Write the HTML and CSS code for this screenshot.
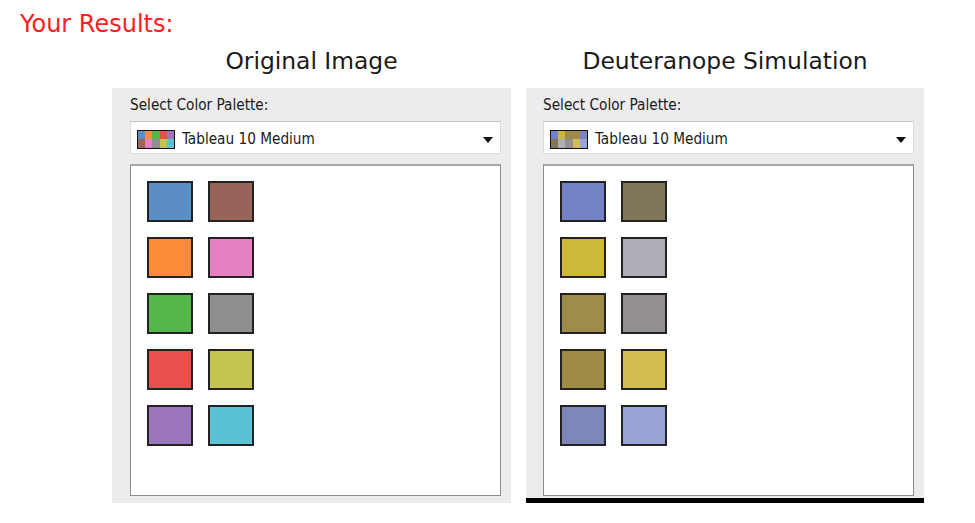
FILE: index.html
```html
<!DOCTYPE html>
<html>
<head>
<meta charset="utf-8">
<link rel="stylesheet" href="styles.css">
</head>
<body>
<div class="results">Your Results:</div>
<div class="row titles">
  <div class="title">Original Image</div>
  <div class="title">Deuteranope Simulation</div>
</div>
<div class="row panels">
  <div class="panel">
    <div class="label">Select Color Palette:</div>
    <div class="dropdown">
      <div class="mini">
        <span style="background:#5b8dc6"></span><span style="background:#fd8c3a"></span><span style="background:#55b64a"></span><span style="background:#e8504c"></span><span style="background:#9b76bd"></span>
        <span style="background:#9a6459"></span><span style="background:#e780c0"></span><span style="background:#8f8f8f"></span><span style="background:#c4c44e"></span><span style="background:#5bc2d3"></span>
      </div>
      <span class="name">Tableau 10 Medium</span>
      <span class="arrow"></span>
    </div>
    <div class="box">
      <div class="swatches">
        <div class="sw" style="background:#5b8dc6"></div>
        <div class="sw" style="background:#966459"></div>
        <div class="sw" style="background:#fd8c3a"></div>
        <div class="sw" style="background:#e780c0"></div>
        <div class="sw" style="background:#55b64a"></div>
        <div class="sw" style="background:#8f8f8f"></div>
        <div class="sw" style="background:#e8504c"></div>
        <div class="sw" style="background:#c4c44e"></div>
        <div class="sw" style="background:#9b76bd"></div>
        <div class="sw" style="background:#5bc2d3"></div>
      </div>
    </div>
  </div>
  <div class="panel panel-sim">
    <div class="label">Select Color Palette:</div>
    <div class="dropdown">
      <div class="mini">
        <span style="background:#7482c6"></span><span style="background:#cdb838"></span><span style="background:#9e8c4c"></span><span style="background:#9e8c44"></span><span style="background:#7f86b8"></span>
        <span style="background:#80765a"></span><span style="background:#aeadb8"></span><span style="background:#959090"></span><span style="background:#d3bd4e"></span><span style="background:#98a4d4"></span>
      </div>
      <span class="name">Tableau 10 Medium</span>
      <span class="arrow"></span>
    </div>
    <div class="box">
      <div class="swatches">
        <div class="sw" style="background:#7482c6"></div>
        <div class="sw" style="background:#80765a"></div>
        <div class="sw" style="background:#cdb838"></div>
        <div class="sw" style="background:#aeadb8"></div>
        <div class="sw" style="background:#9e8c4c"></div>
        <div class="sw" style="background:#959090"></div>
        <div class="sw" style="background:#9e8c44"></div>
        <div class="sw" style="background:#d3bd4e"></div>
        <div class="sw" style="background:#7f86b8"></div>
        <div class="sw" style="background:#98a4d4"></div>
      </div>
    </div>
  </div>
</div>
</body>
</html>
```
FILE: styles.css
```css
html, body {
  margin: 0;
  padding: 0;
  background: #ffffff;
}
body {
  width: 975px;
  height: 523px;
  overflow: hidden;
  font-family: "DejaVu Sans", Verdana, sans-serif;
}
.results {
  margin: 10px 0 0 20px;
  font-size: 24px;
  line-height: 28px;
  color: #ff2020;
}
.row {
  display: grid;
  grid-template-columns: 399px 398px;
  column-gap: 15px;
  margin-left: 112px;
}
.titles {
  margin-top: 9px;
  margin-bottom: 13px;
}
.title {
  text-align: center;
  font-size: 23.4px;
  line-height: 28px;
  color: #1a1a1a;
}
.panel {
  background: #ececec;
  padding: 8px 10px 7px 18px;
  display: flex;
  flex-direction: column;
  font-family: "DejaVu Sans Condensed", "DejaVu Sans", sans-serif;
  font-stretch: condensed;
  font-size: 15.2px;
  color: #1a1a1a;
}
.panel-sim {
  padding-left: 17px;
  padding-bottom: 2px;
  border-bottom: 5px solid #000000;
}
.label {
  line-height: 18px;
  height: 18px;
}
.dropdown {
  margin-top: 7px;
  height: 33px;
  box-sizing: border-box;
  background: #ffffff;
  border: 1px solid #dcdcdc;
  border-top-color: #c4c4c4;
  display: flex;
  align-items: center;
  padding: 3px 7px 0 6px;
}
.mini {
  width: 38px;
  height: 19px;
  box-sizing: border-box;
  border: 1px solid #111111;
  display: grid;
  grid-template-columns: repeat(5, 1fr);
  grid-template-rows: 1fr 1fr;
}
.mini span {
  display: block;
}
.name {
  margin-left: 7px;
  flex: 1;
  line-height: 18px;
}
.arrow {
  width: 0;
  height: 0;
  border-left: 5px solid transparent;
  border-right: 5px solid transparent;
  border-top: 6px solid #111111;
  margin-top: 1px;
}
.box {
  margin-top: 10px;
  height: 332px;
  box-sizing: border-box;
  background: #ffffff;
  border: 1px solid #8c8c8c;
  border-top: 2px solid #a8a8a8;
  padding: 15px 16px;
}
.swatches {
  display: grid;
  grid-template-columns: repeat(2, 46px);
  grid-auto-rows: 41px;
  column-gap: 15px;
  row-gap: 15px;
}
.sw {
  box-sizing: border-box;
  border: 2px solid #222222;
}
```
